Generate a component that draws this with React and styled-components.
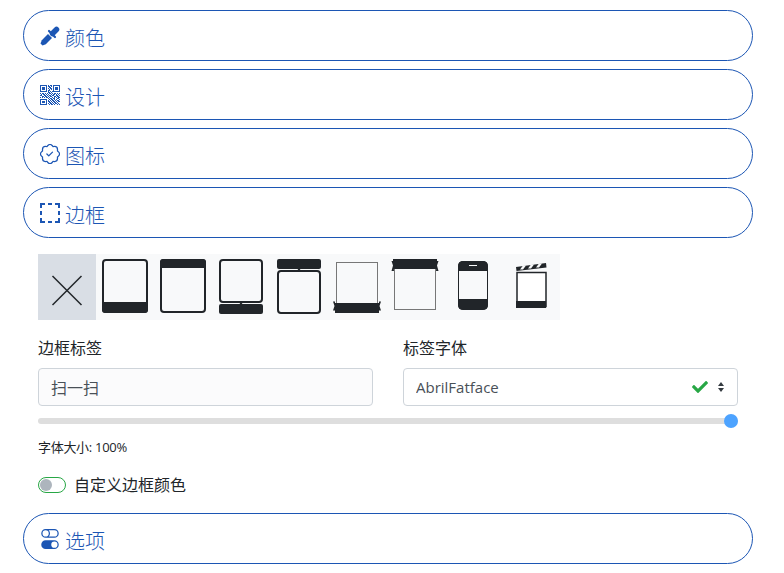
import React from 'react';
import styled, { createGlobalStyle } from 'styled-components';
import { FaCheck } from 'react-icons/fa';
import { BsPatchCheck, BsToggles } from 'react-icons/bs';

const GlobalStyle = createGlobalStyle`
  html, body {
    margin: 0;
    background: #fff;
    font-family: 'Open Sans', 'Noto Sans CJK SC', sans-serif;
    color: #212529;
  }
  * { box-sizing: border-box; }
`;

const Page = styled.div`
  width: 730px;
  margin-left: 23px;
  padding-top: 10px;
  display: flex;
  flex-direction: column;
  gap: 8px;
`;

const Section = styled.button`
  height: 51px;
  width: 100%;
  display: flex;
  align-items: center;
  gap: 5px;
  padding: 0 16px;
  background: #fff;
  border: 1px solid #1c56b4;
  border-radius: 26px;
  color: #1c56b4;
  font-family: inherit;
  font-size: 20px;
  line-height: 1;
  svg { flex: none; }
`;

const SectionTitle = styled.span`
  padding-top: 6px;
  font-weight: 300;
`;

const Body = styled.div`
  padding: 8px 15px 9px;
`;

const FrameRow = styled.div`
  display: flex;
  width: 522px;
  background: #f8f9fa;
`;

const FrameOption = styled.div`
  width: 58px;
  height: 66px;
  display: flex;
  align-items: center;
  justify-content: center;
  background: ${p => (p.$active ? '#d9dee5' : 'transparent')};
  svg { display: block; }
`;

const Fields = styled.div`
  display: grid;
  grid-template-columns: 335px 335px;
  column-gap: 30px;
  margin-top: 17px;
`;

const Field = styled.div`
  display: flex;
  flex-direction: column;
  gap: 9px;
`;

const Label = styled.label`
  font-size: 16px;
  line-height: 22px;
  color: #212529;
`;

const TextBox = styled.input`
  height: 38px;
  width: 100%;
  padding: 0 12px;
  border: 1px solid #ced4da;
  border-radius: 4px;
  background: #fbfbfc;
  color: #495057;
  font-family: inherit;
  font-size: 16px;
  outline: none;
`;

const SelectWrap = styled.div`
  position: relative;
  height: 38px;
`;

const FontSelect = styled.select`
  appearance: none;
  width: 100%;
  height: 38px;
  padding: 0 12px;
  border: 1px solid #ced4da;
  border-radius: 4px;
  background: #fff;
  color: #495057;
  font-family: inherit;
  font-size: 15px;
  outline: none;
`;

const SelectIcons = styled.div`
  position: absolute;
  top: 0;
  right: 13px;
  height: 100%;
  display: flex;
  align-items: center;
  gap: 9px;
  pointer-events: none;
`;

const Slider = styled.input`
  appearance: none;
  display: block;
  width: 100%;
  height: 6px;
  margin: 12px 0 0;
  background: #dedede;
  border-radius: 3px;
  outline: none;
  &::-webkit-slider-thumb {
    appearance: none;
    width: 14px;
    height: 14px;
    border-radius: 50%;
    background: #4da3ff;
    border: none;
  }
`;

const SizeNote = styled.div`
  margin-top: 14px;
  font-size: 13px;
  line-height: 18px;
  letter-spacing: -0.3px;
  color: #212529;
`;

const SwitchRow = styled.div`
  display: flex;
  align-items: center;
  gap: 8px;
  margin-top: 18px;
  font-size: 16px;
  line-height: 22px;
`;

const Switch = styled.span`
  width: 28px;
  height: 16px;
  border: 1px solid #28a745;
  border-radius: 8px;
  display: flex;
  align-items: center;
  padding-left: 1px;
  background: #fff;
  &::before {
    content: '';
    width: 12px;
    height: 12px;
    border-radius: 50%;
    background: #adb5bd;
  }
`;

const BLUE = '#1c56b4';
const DARK = '#212529';
const GRAY = '#777';

const CloseIcon = () => (
  <svg width="58" height="66" viewBox="0 0 58 66">
    <path d="M14.500 22 L43.500 51 M43.500 22 L14.500 51" stroke={DARK} strokeWidth="1.500" fill="none" />
  </svg>
);

const Thumb = ({ children }) => (
  <svg width="58" height="66" viewBox="0 0 58 66">
    {children}
  </svg>
);

const frames = [
  <Thumb key="bottom">
    <rect x="7" y="6" width="44" height="52" rx="3" fill="none" stroke={DARK} strokeWidth="2" />
    <path d="M6 48h46v8a3 3 0 0 1-3 3H9a3 3 0 0 1-3-3z" fill={DARK} />
  </Thumb>,
  <Thumb key="top">
    <rect x="7" y="6" width="44" height="52" rx="3" fill="none" stroke={DARK} strokeWidth="2" />
    <path d="M6 8a3 3 0 0 1 3-3h40a3 3 0 0 1 3 3v6H6z" fill={DARK} />
  </Thumb>,
  <Thumb key="bubble-bottom">
    <rect x="8" y="6" width="42" height="42" rx="3" fill="none" stroke={DARK} strokeWidth="2" />
    <rect x="7" y="50" width="44" height="10" rx="2" fill={DARK} />
    <path d="M27.500 50l1.500-2 1.500 2z" fill={DARK} />
  </Thumb>,
  <Thumb key="bubble-top">
    <rect x="7" y="5" width="44" height="10" rx="2" fill={DARK} />
    <path d="M27.500 15l1.500 2 1.500-2z" fill={DARK} />
    <rect x="8" y="17" width="42" height="42" rx="3" fill="none" stroke={DARK} strokeWidth="2" />
  </Thumb>,
  <Thumb key="ribbon-bottom">
    <rect x="8.500" y="8.500" width="41" height="45" fill="none" stroke={GRAY} strokeWidth="1" />
    <path d="M7 49h44v10H7z" fill={DARK} />
    <path d="M7 47.500H5l1.500 4.500L5 56.500h2zM51 47.500h2L51.500 52l1.500 4.500h-2z" fill={DARK} />
  </Thumb>,
  <Thumb key="ribbon-top">
    <rect x="8.500" y="10" width="41" height="45.500" fill="none" stroke={GRAY} strokeWidth="1" />
    <path d="M7 5h44v10H7z" fill={DARK} />
    <path d="M7 7H5.500L7 11.500 5.500 17H8zM51 7h1.500L51 11.500l1.500 5.500H50z" fill={DARK} />
  </Thumb>,
  <Thumb key="phone">
    <rect x="14.500" y="7.500" width="29" height="48" rx="4" fill="#f8f9fa" stroke={DARK} strokeWidth="1" />
    <path d="M14 12a5 5 0 0 1 5-5h20a5 5 0 0 1 5 5v5H14z" fill={DARK} />
    <path d="M14 45h30v6a5 5 0 0 1-5 5H19a5 5 0 0 1-5-5z" fill={DARK} />
    <rect x="25" y="11" width="8" height="1" fill="#f8f9fa" />
  </Thumb>,
  <Thumb key="clapper">
    <rect x="15" y="18.500" width="29" height="34" fill="#fff" stroke={DARK} strokeWidth="1.500" />
    <rect x="14" y="47" width="30" height="7" fill={DARK} />
    <path d="M14 13l30-4 .5 4.500-30 3.500z" fill={DARK} />
    <path d="M18 15.500l3-4h3l-3 4zM26 14.500l3-4h3l-3 4zM34 13.500l3-4h3l-3 4z" fill="#f8f9fa" />
  </Thumb>,
];

const DropperIcon = () => (
  <svg width="20" height="20" viewBox="0 0 20 20">
    <path d="M12.500 7.500L16.500 3.500" stroke={BLUE} strokeWidth="5.500" strokeLinecap="round" />
    <path d="M9 5L15 11" stroke={BLUE} strokeWidth="2.200" strokeLinecap="round" />
    <path d="M8 8L12 12L5.800 18.200L2.500 19.500L.5 17.500L1.800 14.200Z" fill={BLUE} />
  </svg>
);

const QR_ROWS = [
  '11111110101101111111',
  '10000010110101000001',
  '10111010011001011101',
  '10111010101101011101',
  '10111010010101011101',
  '10000010110001000001',
  '11111110101011111111',
  '00000000110100000000',
  '10110101011010110101',
  '01011010100101101010',
  '11001101011011001101',
  '00110110101100110110',
  '10101011010010101011',
  '00000000101101100110',
  '11111110010110101001',
  '10000010101011010110',
  '10111010110101101011',
  '10111010011010110100',
  '10000010101101011010',
  '11111110010110100101',
];

const QrIcon = () => {
  const d = QR_ROWS.map((row, y) =>
    row.split('').map((c, x) => (c === '1' ? `M${x} ${y}h1v1h-1z` : '')).join('')
  ).join('');
  return (
    <svg width="20" height="20" viewBox="0 0 20 20">
      <path d={d} fill={BLUE} />
    </svg>
  );
};

const DashedSquare = () => (
  <svg width="20" height="20" viewBox="0 0 20 20">
    <path
      d="M1 5V1h4M8 1h4M15 1h4v4M19 8v4M19 15v4h-4M12 19H8M5 19H1v-4M1 12V8"
      fill="none"
      stroke={BLUE}
      strokeWidth="2"
    />
  </svg>
);

const UpDown = () => (
  <svg width="8" height="12" viewBox="0 0 16 24">
    <path d="M2 10l6-8 6 8zM2 14l6 8 6-8z" fill="#343a40" />
  </svg>
);

export default function App() {
  return (
    <>
      <GlobalStyle />
      <Page>
        <Section><DropperIcon /><SectionTitle>颜色</SectionTitle></Section>
        <Section><QrIcon /><SectionTitle>设计</SectionTitle></Section>
        <Section><BsPatchCheck size={20} /><SectionTitle>图标</SectionTitle></Section>
        <Section><DashedSquare /><SectionTitle>边框</SectionTitle></Section>
        <Body>
          <FrameRow>
            <FrameOption $active><CloseIcon /></FrameOption>
            {frames.map(f => <FrameOption key={f.key}>{f}</FrameOption>)}
          </FrameRow>
          <Fields>
            <Field>
              <Label>边框标签</Label>
              <TextBox defaultValue="扫一扫" />
            </Field>
            <Field>
              <Label>标签字体</Label>
              <SelectWrap>
                <FontSelect defaultValue="AbrilFatface">
                  <option>AbrilFatface</option>
                </FontSelect>
                <SelectIcons>
                  <FaCheck size={16} color="#28a745" />
                  <UpDown />
                </SelectIcons>
              </SelectWrap>
            </Field>
          </Fields>
          <Slider type="range" min="0" max="100" defaultValue="100" />
          <SizeNote>字体大小: 100%</SizeNote>
          <SwitchRow><Switch />自定义边框颜色</SwitchRow>
        </Body>
        <Section><BsToggles size={20} /><SectionTitle>选项</SectionTitle></Section>
      </Page>
    </>
  );
}
